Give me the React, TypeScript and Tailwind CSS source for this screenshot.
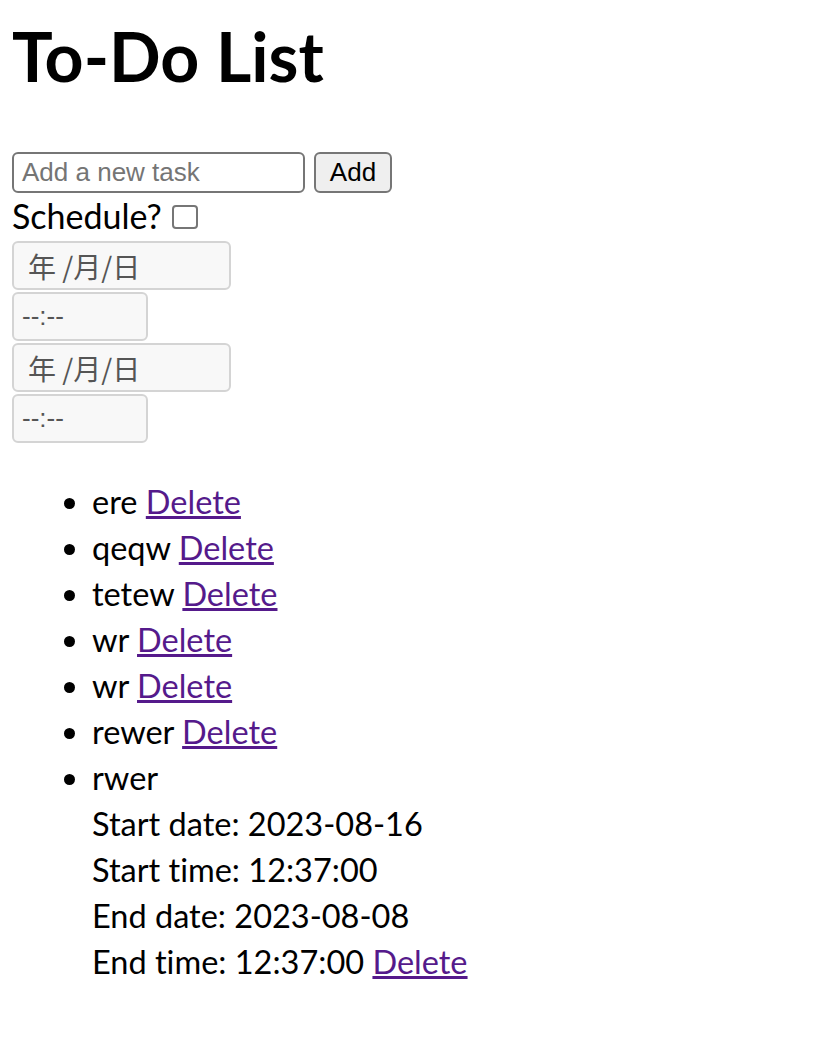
import React from "react";

const items = ["ere", "qeqw", "tetew", "wr", "wr", "rewer"];

function DateBox() {
  return (
    <div className="mt-[2px] flex h-[49px] w-[219px] items-center rounded-[6px] border-2 border-[#d4d4d4] bg-[#f8f8f8] pl-[14px] text-[28px] text-[#555555] [font-family:'Noto_Sans_CJK_SC','Noto_Sans_CJK_JP',sans-serif]">
      年 /月/日
    </div>
  );
}

function TimeBox() {
  return (
    <div className="mt-[2px] flex h-[49px] w-[136px] items-center rounded-[6px] border-2 border-[#d4d4d4] bg-[#f8f8f8] pl-[8px] text-[26px] text-[#555555] [font-family:'Liberation_Sans',Arial,sans-serif]">
      --:--
    </div>
  );
}

export default function App() {
  return (
    <div className="min-h-[1064px] bg-white pl-[12px] text-black [font-family:Lato,'Noto_Sans',sans-serif] [font-variant-ligatures:none]">
      <h1 className="m-0 pt-[12px] text-[68px] font-bold leading-[88px]">To-Do List</h1>
      <div className="mt-[52px] flex items-center gap-[9px]">
        <div className="flex h-[41px] w-[293px] items-center rounded-[6px] border-2 border-[#767676] bg-white pl-[8px] text-[26px] text-[#757575] [font-family:'Liberation_Sans',Arial,sans-serif]">
          Add a new task
        </div>
        <div className="flex h-[41px] w-[78px] items-center justify-center rounded-[6px] border-2 border-[#767676] bg-[#efefef] text-[26px] text-black [font-family:'Liberation_Sans',Arial,sans-serif]">
          Add
        </div>
      </div>
      <div className="flex h-[46px] items-start text-[34px] leading-[46px]">
        <span>Schedule?</span>
        <span className="ml-[10px] mt-[12px] inline-block h-[24px] w-[26px] rounded-[4px] border-2 border-[#767676] bg-white" />
      </div>
      <DateBox />
      <TimeBox />
      <DateBox />
      <TimeBox />
      <ul className="mt-[36px] list-disc pl-[80px] text-[32.5px] leading-[46px]">
        {items.map((t, i) => (
          <li key={i}>
            {t} <a className="text-[#551a8b] underline">Delete</a>
          </li>
        ))}
        <li>
          rwer
          <br />
          Start date: 2023-08-16
          <br />
          Start time: 12:37:00
          <br />
          End date: 2023-08-08
          <br />
          End time: 12:37:00 <a className="text-[#551a8b] underline">Delete</a>
        </li>
      </ul>
    </div>
  );
}
